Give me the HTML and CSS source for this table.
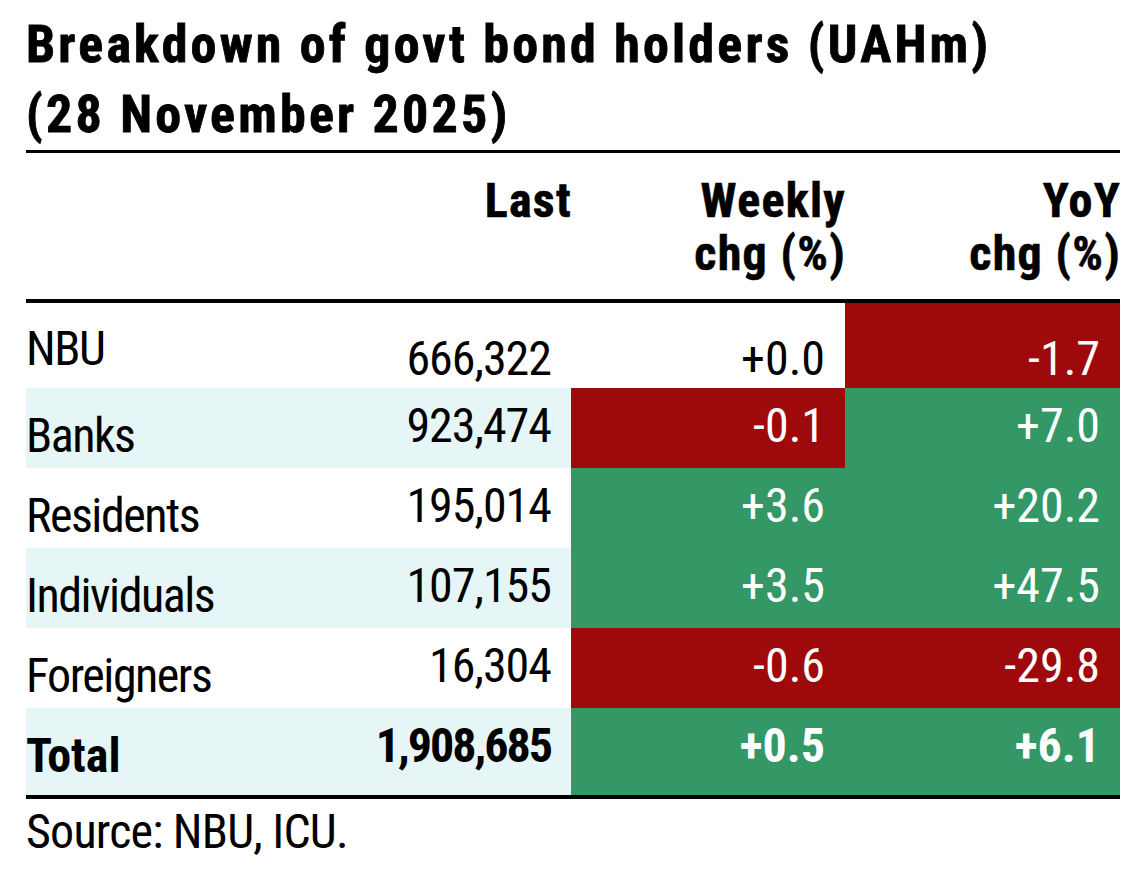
FILE: index.html
```html
<!DOCTYPE html>
<html lang="en">
<head>
<meta charset="utf-8">
<title>Breakdown of govt bond holders</title>
<link rel="stylesheet" href="styles.css">
</head>
<body>
<div class="page">
  <h1 class="title">Breakdown of govt bond holders (UAHm)<br>(28 November 2025)</h1>
  <div class="table">
    <div class="row head">
      <div class="cell"></div>
      <div class="cell hnum">Last</div>
      <div class="cell hnum">Weekly<br>chg (%)</div>
      <div class="cell hnum">YoY<br>chg (%)</div>
    </div>
    <div class="row first">
      <div class="cell lbl">NBU</div>
      <div class="cell num last">666,322</div>
      <div class="cell num">+0.0</div>
      <div class="cell num red">-1.7</div>
    </div>
    <div class="row">
      <div class="cell lbl tint">Banks</div>
      <div class="cell num last tint">923,474</div>
      <div class="cell num red">-0.1</div>
      <div class="cell num green">+7.0</div>
    </div>
    <div class="row">
      <div class="cell lbl">Residents</div>
      <div class="cell num last">195,014</div>
      <div class="cell num green">+3.6</div>
      <div class="cell num green">+20.2</div>
    </div>
    <div class="row">
      <div class="cell lbl tint">Individuals</div>
      <div class="cell num last tint">107,155</div>
      <div class="cell num green">+3.5</div>
      <div class="cell num green">+47.5</div>
    </div>
    <div class="row">
      <div class="cell lbl">Foreigners</div>
      <div class="cell num last">16,304</div>
      <div class="cell num red">-0.6</div>
      <div class="cell num red">-29.8</div>
    </div>
    <div class="row total">
      <div class="cell lbl tint">Total</div>
      <div class="cell num last tint">1,908,685</div>
      <div class="cell num green">+0.5</div>
      <div class="cell num green">+6.1</div>
    </div>
  </div>
  <p class="source">Source: NBU, ICU.</p>
</div>
</body>
</html>
```

FILE: styles.css
```css
html, body {
  margin: 0;
  padding: 0;
  background: #ffffff;
}

body {
  font-family: "Roboto Condensed", "Liberation Sans", sans-serif;
  color: #000000;
}

.page {
  padding: 10px 0 0 26px;
  width: 1094px;
}

.title {
  margin: 0;
  font-size: 52px;
  line-height: 70px;
  font-weight: bold;
  letter-spacing: 3.2px;
  -webkit-text-stroke: 0.8px #000;
}

.table {
  border-top: 3px solid #000;
  border-bottom: 4px solid #000;
}

.row {
  display: grid;
  grid-template-columns: 271px 274px 274px 275px;
  height: 80px;
}

.cell {
  font-size: 48px;
  line-height: 48px;
  box-sizing: border-box;
}

.lbl {
  padding-top: 24px;
  letter-spacing: -1.5px;
}

.num {
  text-align: right;
  padding-top: 14px;
  padding-right: 20px;
}

.num.last {
  letter-spacing: -1px;
}

.head {
  height: 146px;
  border-bottom: 4px solid #000;
}

.hnum {
  font-weight: bold;
  text-align: right;
  line-height: 53px;
  padding-top: 21px;
  letter-spacing: 1.3px;
  margin-right: -1px;
  -webkit-text-stroke: 0.6px #000;
}

.first {
  height: 85px;
}

.first .lbl {
  padding-top: 22px;
}

.first .num {
  padding-top: 32px;
}

.total {
  height: 87px;
}

.total .cell {
  font-weight: bold;
}

.total .num {
  padding-top: 14px;
}

.total .num.last {
  letter-spacing: -2px;
}

.total .lbl {
  padding-top: 24px;
  letter-spacing: 0;
}

.tint {
  background: #e6f5f5;
}

.red {
  background: #9e0a0b;
  color: #ffffff;
}

.green {
  background: #339766;
  color: #ffffff;
}

.source {
  margin: 0;
  padding-top: 9px;
  font-size: 48px;
  line-height: 48px;
  letter-spacing: -0.8px;
}
```
